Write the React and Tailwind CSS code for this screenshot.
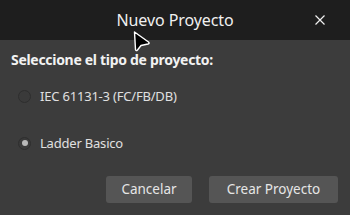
import React from 'react';

const Cursor = () => (
    <svg className="absolute left-[132px] top-[30px]" width="20" height="24" viewBox="0 0 20 24">
        <path d="M2.5 2 L3.5 19.5 Q4 21.5 5.5 20 L9 15.5 L16 14 Q18 13.5 16.5 12 Z" fill="#000" stroke="#fff" strokeWidth="1.4" strokeLinejoin="round" />
    </svg>
);

export default function App() {
    return (
        <div className="relative w-[350px] h-[215px] bg-[#3c3c3c] text-[#e8e8e8] flex flex-col overflow-hidden" style={{ fontFamily: '"Noto Sans", "Open Sans", sans-serif' }}>
            {/* Barra de título */}
            <div className="h-[40px] bg-[#1e1e1e] relative flex items-center justify-center">
                <span className="text-[16px] text-[#f0f0f0] tracking-[-0.1px]">Nuevo Proyecto</span>
                <svg className="absolute right-[25px] top-[15px]" width="10" height="10" viewBox="0 0 10 10">
                    <path d="M0.5 0.5 L9.5 9.5 M9.5 0.5 L0.5 9.5" stroke="#f0f0f0" strokeWidth="1.2" />
                </svg>
            </div>

            {/* Contenido */}
            <div className="flex-1 flex flex-col px-[11px]">
                <div className="mt-[9px] text-[14px] font-bold text-[#f2f2f2] tracking-[-0.3px]">Seleccione el tipo de proyecto:</div>

                <div className="mt-[17px] flex items-center gap-[9px] pl-[7px]">
                    <span className="w-[13px] h-[13px] rounded-full border border-[#2e2e2e] bg-[#3a3a3a]" />
                    <span className="text-[13px] text-[#e0e0e0] tracking-[-0.2px]">IEC 61131-3 (FC/FB/DB)</span>
                </div>

                <div className="mt-[27px] flex items-center gap-[9px] pl-[7px]">
                    <span className="w-[13px] h-[13px] rounded-full border border-[#2e2e2e] bg-[#3a3a3a] flex items-center justify-center">
                        <span className="w-[6px] h-[6px] rounded-full bg-[#b8b8b8]" />
                    </span>
                    <span className="text-[13px] text-[#e0e0e0] tracking-[-0.2px]">Ladder Basico</span>
                </div>

                <div className="mt-auto mb-[12px] flex justify-end gap-[17px] pr-[1px]">
                    <button className="w-[86px] h-[27px] rounded-[3px] bg-[#555555] text-[13.5px] text-[#e6e6e6]">Cancelar</button>
                    <button className="w-[129px] h-[27px] rounded-[3px] bg-[#555555] text-[13.5px] text-[#e6e6e6]">Crear Proyecto</button>
                </div>
            </div>

            <Cursor />
        </div>
    );
}
